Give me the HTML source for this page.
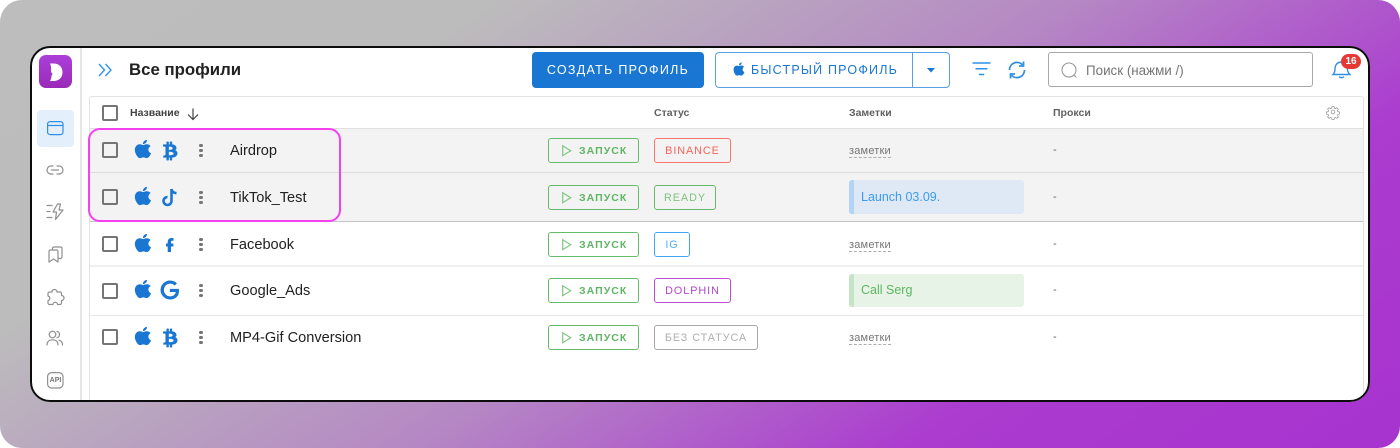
<!DOCTYPE html>
<html><head><meta charset="utf-8">
<style>
html,body{margin:0;padding:0;background:#fff;width:1400px;height:448px;overflow:hidden}
*{box-sizing:border-box}
body{font-family:"Liberation Sans",sans-serif;position:relative}
#bg{position:absolute;left:0;top:0;width:1400px;height:448px;border-radius:22px;background:linear-gradient(146deg,#bdbdbd 0%,#bcbcbc 24%,#b588c4 52%,#ab3ccf 76%,#a733cf 100%)}
#card{position:absolute;left:30px;top:46px;width:1340px;height:356px;background:#fff;border-radius:20px}
#cardb{position:absolute;left:30px;top:46px;width:1340px;height:356px;border:2px solid #0c0c0c;border-radius:20px}
#clip{position:absolute;left:0;top:0;width:1400px;height:448px;clip-path:inset(46px 30px 46px 30px round 20px)}
.a{position:absolute;white-space:nowrap}
svg{position:absolute;overflow:visible}
.row{position:absolute;left:90px;width:1273px}
.cb{position:absolute;left:102px;width:16px;height:16px;border:2px solid #757575;border-radius:2px}
.nm{position:absolute;left:230px;font-size:14.6px;color:#212121;line-height:18px;white-space:nowrap}
.run{position:absolute;left:548px;width:91px;height:25px;border:1px solid #66bb6a;border-radius:3px;color:#66bb6a}
.run b{position:absolute;left:30px;top:6px;font-size:10.5px;line-height:13px;letter-spacing:1.05px;font-weight:700;color:#5fb564}
.run svg{left:13px;top:6px}
.tag{position:absolute;left:654px;height:25px;border:1px solid;border-radius:3px;font-size:10.8px;line-height:25px;letter-spacing:.95px;text-align:center;white-space:nowrap}
.h{position:absolute;top:107px;font-size:10.5px;font-weight:700;color:#616161;line-height:13px;white-space:nowrap}
.za{position:absolute;left:849px;font-size:11px;color:#757575;line-height:11px;height:12px;border-bottom:1px dashed #adadad;white-space:nowrap;letter-spacing:.2px}
.nt{position:absolute;left:849px;width:175px;height:34px;border-radius:3px;font-size:12.5px;line-height:34px;padding-left:12px;white-space:nowrap}
.nt i{position:absolute;left:0;top:0;bottom:0;width:5px;border-radius:3px 0 0 3px}
.d{position:absolute;left:1053px;font-size:11px;color:#616161;line-height:12px}
.dots{position:absolute;left:199.3px;width:3.4px;height:14px}
.dots i{position:absolute;left:0;width:3.4px;height:3.4px;border-radius:50%;background:#757575}
.si{fill:none;stroke:#8f8f8f;stroke-width:1.2;stroke-linecap:round;stroke-linejoin:round}
</style></head>
<body>
<div id="bg"></div>
<div id="card"></div>
<div id="clip">

<!-- sidebar -->
<div class="a" style="left:80px;top:48px;width:2px;height:352px;background:#e6e6e6"></div>
<div class="a" style="left:39px;top:55px;width:33px;height:33px;border-radius:7px;background:linear-gradient(180deg,#ab3fd8,#9a2ab8)"></div>
<svg style="left:39px;top:55px" width="33" height="33"><path d="M11 8.500h3.500c5.500 0 9 3.500 9 8.700s-3.500 8.800-9 8.800H11c1-1.700 1.600-3.500 1.400-5.500 1.100-.4 1.300-1.200.6-2.200-.9-1.100-1.100-1.900-.9-3C12.300 12.500 11.900 10.300 11 8.500z" fill="#fff"/></svg>
<div class="a" style="left:37px;top:110px;width:37px;height:37px;border-radius:4px;background:#e3effb"></div>
<svg style="left:47px;top:121px" width="17" height="15"><rect x=".6" y=".6" width="15.400" height="13" rx="2.500" fill="none" stroke="#2f8fe6" stroke-width="1.200"/><path d="M.6 4.500h15.400" stroke="#2f8fe6" stroke-width="1.200"/></svg>
<svg style="left:46px;top:164px" width="18" height="12"><g class="si"><path d="M7 2H5a4 4 0 0 0 0 8h2M11 2h2a4 4 0 0 1 0 8h-2M5.500 6h7"/></g></svg>
<svg style="left:46px;top:203px" width="19" height="18"><g class="si"><path d="M1 2.500h5M1 8.500h3M1 14.500h5M11.500 1 7 9h3.500L9.500 16.500 17 7h-4l1.500-6z"/></g></svg>
<svg style="left:48px;top:246px" width="15" height="17"><g class="si"><path d="M1 5.500a1.500 1.500 0 0 1 1.500-1.500h6A1.500 1.500 0 0 1 10 5.500V16l-4.500-3L1 16zM4.500 3V2.500A1.500 1.500 0 0 1 6 1h6.500A1.500 1.500 0 0 1 14 2.500V11a1.500 1.500 0 0 1-1.500 1.500H11"/></g></svg>
<svg style="left:46px;top:288px" width="18" height="18"><g class="si"><path d="M6 4a2.500 2.500 0 0 1 5 0h3a1.500 1.500 0 0 1 1.500 1.500V7.500a2.500 2.500 0 0 1 0 5V15a1.500 1.500 0 0 1-1.500 1.500h-2.500a2.200 2.200 0 0 0-4.500 0H3.500A1.500 1.500 0 0 1 2 15v-2.500a2.300 2.300 0 0 0 0-4.500V5.500A1.500 1.500 0 0 1 3.500 4z"/></g></svg>
<svg style="left:46px;top:330px" width="18" height="16"><g class="si"><circle cx="6.500" cy="4.500" r="3.300"/><path d="M1 15c0-3.500 2.300-5.200 5.500-5.200S12 11.500 12 15M11 1.300a3.300 3.300 0 0 1 0 6.400M13 10.200c2.200.5 3.500 2.200 3.500 4.800"/></g></svg>
<svg style="left:47px;top:372px" width="17" height="17"><rect x=".6" y=".6" width="15.400" height="15.400" rx="4" fill="none" stroke="#8f8f8f" stroke-width="1.200"/></svg>
<div class="a" style="left:47px;top:372px;width:17px;text-align:center;font-size:7px;font-weight:700;line-height:17px;color:#757575">API</div>

<!-- top bar -->
<svg style="left:98px;top:63px" width="15" height="14"><path d="M1 1l5.500 6L1 13M7.500 1L13 7l-5.500 6" fill="none" stroke="#2f96ee" stroke-width="1.400"/></svg>
<div class="a" style="left:129px;top:59px;font-size:16.8px;line-height:22px;font-weight:700;color:#212121">Все профили</div>
<div class="a" style="left:532px;top:52px;width:172px;height:36px;background:#1976d2;border-radius:4px;color:#fff;font-size:12.500px;line-height:36px;text-align:center;letter-spacing:1.300px;font-weight:400">СОЗДАТЬ ПРОФИЛЬ</div>
<div class="a" style="left:715px;top:52px;width:235px;height:36px;border:1px solid #5a9fe3;border-radius:4px;background:#fff"></div>
<div class="a" style="left:912px;top:52px;width:1px;height:36px;background:#5a9fe3"></div>
<svg style="left:731px;top:61px" width="16" height="16" viewBox="0 0 24 24"><use href="#ap"/></svg>
<div class="a" style="left:751px;top:52px;font-size:12.500px;line-height:36px;letter-spacing:1.200px;color:#1976d2">БЫСТРЫЙ ПРОФИЛЬ</div>
<svg style="left:927px;top:68px" width="9" height="5"><path d="M0 0h8L4 4.500z" fill="#1976d2"/></svg>
<svg style="left:972px;top:62px" width="19" height="15"><path d="M.5 1h18M3.500 6.800h12M6.800 12.500h5.400" stroke="#2f8fe6" stroke-width="1.500" fill="none"/></svg>
<svg style="left:1008px;top:60px" width="18" height="20" viewBox="0 0 18 20"><path d="M1.500 10a7.500 7.500 0 0 1 13-5.200M16.500 10a7.500 7.500 0 0 1-13 5.200" fill="none" stroke="#2f8fe6" stroke-width="1.800"/><path d="M15.500 1.500v4.500h-4.500M2.500 18.500v-4.500h4.500" fill="none" stroke="#2f8fe6" stroke-width="1.800"/></svg>
<div class="a" style="left:1048px;top:52px;width:265px;height:35px;border:1px solid #a8a8a8;border-radius:3px;background:#fff"></div>
<svg style="left:1061px;top:62px" width="18" height="18"><circle cx="8" cy="8" r="7" fill="none" stroke="#9a9a9a" stroke-width="1.100"/><path d="M13 13l2.500 2.500" stroke="#9a9a9a" stroke-width="1.100"/></svg>
<div class="a" style="left:1086px;top:52px;font-size:13.400px;line-height:38px;color:#757575">Поиск (нажми /)</div>
<svg style="left:1332px;top:59px" width="19" height="20"><path d="M1 15.500c1.500-1.500 2-3 2-5.500 0-4 2.400-7 6.500-7s6 3 6 7c0 2.500.8 4 2.300 5.500zM7 17.800c1.500 1 3.500 1 5 0" fill="none" stroke="#2f8fe6" stroke-width="1.400"/></svg>
<div class="a" style="left:1341px;top:54px;width:20px;height:15px;border-radius:8px;background:#e53935;color:#fff;font-size:10px;font-weight:700;text-align:center;line-height:15px">16</div>

<!-- table -->
<div class="a" style="left:89px;top:96px;width:1275px;height:306px;border:1px solid #e3e3e3;border-bottom:0;border-radius:3px 3px 0 0;background:#fff"></div>
<div class="row" style="top:128px;height:1px;background:#e0e0e0"></div>
<div class="row" style="top:129px;height:92px;background:#f3f3f3"></div>
<div class="row" style="top:172px;height:1px;background:#dcdcdc"></div>
<div class="row" style="top:221px;height:1px;background:#c4c4c4"></div>
<div class="row" style="top:265px;height:2px;background:#efefef"></div>
<div class="row" style="top:315px;height:1px;background:#e5e5e5"></div>

<div class="cb" style="top:105px"></div>
<div class="h" style="left:130px;color:#424242">Название</div>
<svg style="left:187px;top:107.500px" width="12" height="13"><path d="M6 .5v11M1 6.500l5 5 5-5" fill="none" stroke="#424242" stroke-width="1.200"/></svg>
<div class="h" style="left:654px">Статус</div>
<div class="h" style="left:849px">Заметки</div>
<div class="h" style="left:1053px">Прокси</div>
<svg style="left:1326px;top:105px" width="14" height="14" viewBox="0 0 24 24"><path d="M12 8.500a3.500 3.500 0 1 0 0 7 3.500 3.500 0 0 0 0-7zM10 1.500h4l.6 3.200 2.100.9 2.700-1.800 2.800 2.800-1.800 2.700.9 2.100 3 .6v4l-3 .6-.9 2.100 1.800 2.700-2.800 2.800-2.700-1.800-2.100.9-.6 3h-4l-.6-3-2.100-.9-2.700 1.800-2.800-2.800 1.800-2.700-.9-2.100-3-.6v-4l3-.6.9-2.100-1.800-2.700 2.800-2.800 2.700 1.800 2.100-.9z" transform="translate(1.200 1.200) scale(.9)" fill="none" stroke="#9a9a9a" stroke-width="1.500"/></svg>

<svg width="0" height="0" style="left:0;top:0"><defs>
<path id="ap" fill="#1976d2" d="M18.710,19.500C17.880,20.740 17,21.950 15.660,21.970C14.320,22 13.890,21.180 12.370,21.180C10.840,21.180 10.370,21.950 9.100,22C7.790,22.050 6.800,20.680 5.960,19.470C4.250,17 2.940,12.450 4.700,9.390C5.570,7.870 7.130,6.910 8.820,6.880C10.100,6.860 11.320,7.750 12.110,7.750C12.890,7.750 14.370,6.680 15.920,6.840C16.570,6.870 18.390,7.100 19.560,8.820C19.470,8.880 17.390,10.100 17.410,12.630C17.440,15.650 20.060,16.660 20.090,16.670C20.060,16.740 19.670,18.110 18.710,19.500M13,3.500C13.730,2.670 14.940,2.040 15.940,2C16.070,3.170 15.600,4.350 14.900,5.190C14.210,6.040 13.070,6.700 11.950,6.610C11.800,5.460 12.360,4.260 13,3.500Z"/>
<path id="btc" fill="#1976d2" stroke="#1976d2" stroke-width=".5" d="M4.500,5H8V2H10V5H11.500V2H13.500V5C19,5 19,11 16,11.250C20,11 21,19 13.500,19V22H11.500V19H10V22H8V19H4.500L5,17H6A1,1 0 0,0 7,16V8A1,1 0 0,0 6,7H4.500V5M10,7V11C10,11 14.500,11.250 14.500,9C14.500,6.750 10,7 10,7M10,12.500V17C10,17 15.500,17 15.500,14.750C15.500,12.500 10,12.500 10,12.500Z"/>
<path id="pl" d="M.7.7l8 5-8 5z" fill="none" stroke="#81c784" stroke-width="1.200"/>
<path id="fb" fill="#1976d2" d="M1.700 14V4.200C1.700 1.300 3.200 0 5.800 0H7.500V2.800H6.300C5.300 2.800 5 3.300 5 4.300V5.500H7.400V8.500H5V14zM0 5.500H2V8.500H0z"/>
</defs></svg>

<!-- row 1 -->
<div class="cb" style="top:142px"></div>
<svg style="left:131px;top:138px" width="24" height="22" viewBox="0 0 24 24" preserveAspectRatio="none"><use href="#ap"/></svg>
<svg style="left:159px;top:140px" width="23" height="22" viewBox="0 0 24 24" preserveAspectRatio="none"><use href="#btc"/></svg>
<div class="dots" style="top:143.500px"><i style="top:0"></i><i style="top:5px"></i><i style="top:10px"></i></div>
<div class="nm" style="top:142px">Airdrop</div>
<div class="run" style="top:138px"><svg width="12" height="14"><use href="#pl"/></svg><b>ЗАПУСК</b></div>
<div class="tag" style="top:138px;width:77px;border-color:#f8766d;color:#f4645a">BINANCE</div>
<div class="za" style="top:146px">заметки</div>
<div class="d" style="top:144px">-</div>

<!-- row 2 -->
<div class="cb" style="top:189px"></div>
<svg style="left:131px;top:185px" width="24" height="22" viewBox="0 0 24 24" preserveAspectRatio="none"><use href="#ap"/></svg>
<svg style="left:162px;top:188px" width="17" height="18"><path d="M9.500 1v12a4 4 0 1 1-4-4M9.500 1c.3 2.500 2 4 5 4.200" fill="none" stroke="#1976d2" stroke-width="2.600"/></svg>
<div class="dots" style="top:190.500px"><i style="top:0"></i><i style="top:5px"></i><i style="top:10px"></i></div>
<div class="nm" style="top:189px">TikTok_Test</div>
<div class="run" style="top:185px"><svg width="12" height="14"><use href="#pl"/></svg><b>ЗАПУСК</b></div>
<div class="tag" style="top:185px;width:62px;border-color:#66bb6a;color:#7cc480">READY</div>
<div class="nt" style="top:180px;background:#dfe9f5;color:#3b9bf0"><i style="background:#b3d4f5"></i>Launch 03.09.</div>
<div class="d" style="top:191px">-</div>

<!-- row 3 -->
<div class="cb" style="top:236px"></div>
<svg style="left:131px;top:232px" width="24" height="22" viewBox="0 0 24 24" preserveAspectRatio="none"><use href="#ap"/></svg>
<svg style="left:166px;top:238px" width="8" height="14"><use href="#fb"/></svg>
<div class="dots" style="top:237.500px"><i style="top:0"></i><i style="top:5px"></i><i style="top:10px"></i></div>
<div class="nm" style="top:236px">Facebook</div>
<div class="run" style="top:232px"><svg width="12" height="14"><use href="#pl"/></svg><b>ЗАПУСК</b></div>
<div class="tag" style="top:232px;width:36px;border-color:#42a5f5;color:#55aef5">IG</div>
<div class="za" style="top:240px">заметки</div>
<div class="d" style="top:238px">-</div>

<!-- row 4 -->
<div class="cb" style="top:282.500px"></div>
<svg style="left:131px;top:278px" width="24" height="22" viewBox="0 0 24 24" preserveAspectRatio="none"><use href="#ap"/></svg>
<svg style="left:159px;top:279px" width="22" height="22" viewBox="0 0 24 24"><path fill="#1976d2" stroke="#1976d2" stroke-width=".7" d="M21.350,11.100H12.180V13.830H18.690C18.360,17.640 15.190,19.270 12.190,19.270C8.360,19.270 5,16.250 5,12C5,7.900 8.200,4.730 12.200,4.730C15.290,4.730 17.100,6.700 17.100,6.700L19,4.720C19,4.720 16.560,2 12.100,2C6.420,2 2.030,6.800 2.030,12C2.030,17.050 6.160,22 12.250,22C17.600,22 21.500,18.330 21.500,12.910C21.500,11.760 21.350,11.100 21.350,11.100V11.100Z"/></svg>
<div class="dots" style="top:283.500px"><i style="top:0"></i><i style="top:5px"></i><i style="top:10px"></i></div>
<div class="nm" style="top:282px">Google_Ads</div>
<div class="run" style="top:278px"><svg width="12" height="14"><use href="#pl"/></svg><b>ЗАПУСК</b></div>
<div class="tag" style="top:278px;width:77px;border-color:#ba4fd0;color:#b347c9">DOLPHIN</div>
<div class="nt" style="top:274px;height:33px;line-height:33px;background:#e8f3e8;color:#5cb860"><i style="background:#c5e4c6"></i>Call Serg</div>
<div class="d" style="top:284px">-</div>

<!-- row 5 -->
<div class="cb" style="top:329px"></div>
<svg style="left:131px;top:325px" width="24" height="22" viewBox="0 0 24 24" preserveAspectRatio="none"><use href="#ap"/></svg>
<svg style="left:159px;top:327px" width="23" height="22" viewBox="0 0 24 24" preserveAspectRatio="none"><use href="#btc"/></svg>
<div class="dots" style="top:330.500px"><i style="top:0"></i><i style="top:5px"></i><i style="top:10px"></i></div>
<div class="nm" style="top:329px">MP4-Gif Conversion</div>
<div class="run" style="top:325px"><svg width="12" height="14"><use href="#pl"/></svg><b>ЗАПУСК</b></div>
<div class="tag" style="top:325px;width:104px;border-color:#a8a8a8;color:#b0b0b0">БЕЗ СТАТУСА</div>
<div class="za" style="top:333px">заметки</div>
<div class="d" style="top:331px">-</div>

<!-- highlight -->
<div class="a" style="left:87.500px;top:127.500px;width:253px;height:94px;border:2px solid #f440ee;border-radius:12px"></div>
</div>
<div id="cardb"></div>
</body></html>
